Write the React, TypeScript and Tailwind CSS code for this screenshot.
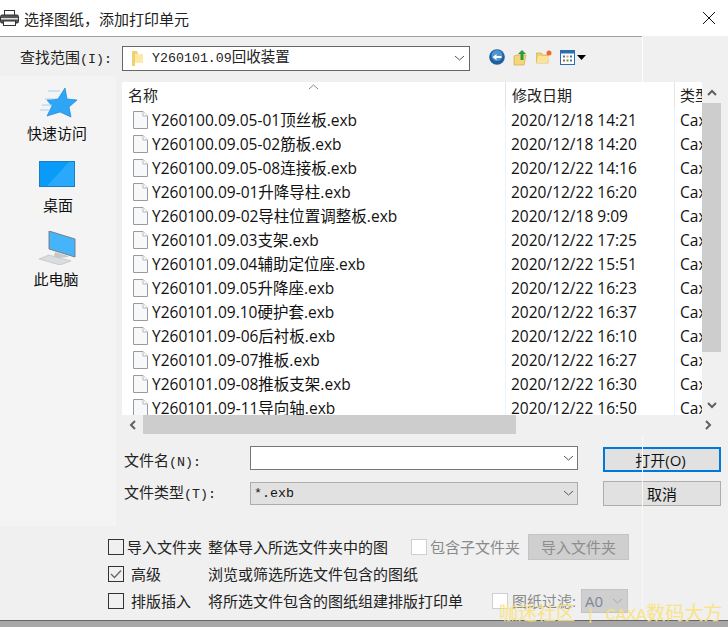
import React from "react";

const sans = "font-['Open_Sans','Noto_Sans_CJK_SC',sans-serif]";
const mono = "font-['Liberation_Mono','Noto_Sans_CJK_SC',monospace]";

const files: [string, string][] = [
  ["Y260100.09.05-01顶丝板.exb", "2020/12/18 14:21"],
  ["Y260100.09.05-02筋板.exb", "2020/12/18 14:20"],
  ["Y260100.09.05-08连接板.exb", "2020/12/22 14:16"],
  ["Y260100.09-01升降导柱.exb", "2020/12/22 16:20"],
  ["Y260100.09-02导柱位置调整板.exb", "2020/12/18 9:09"],
  ["Y260101.09.03支架.exb", "2020/12/22 17:25"],
  ["Y260101.09.04辅助定位座.exb", "2020/12/22 15:51"],
  ["Y260101.09.05升降座.exb", "2020/12/22 16:23"],
  ["Y260101.09.10硬护套.exb", "2020/12/22 16:37"],
  ["Y260101.09-06后衬板.exb", "2020/12/22 16:10"],
  ["Y260101.09-07推板.exb", "2020/12/22 16:27"],
  ["Y260101.09-08推板支架.exb", "2020/12/22 16:30"],
  ["Y260101.09-11导向轴.exb", "2020/12/22 16:50"],
];

const Doc = () => (
  <svg width="15" height="18" viewBox="0 0 15 18" className="shrink-0">
    <path d="M.5.5h9.500l4.500 4.500v12.500h-14z" fill="#f7f8fa" stroke="#9a9a9a" />
    <path d="M10 .5v4.500h4.500" fill="#fff" stroke="#b5b5b5" />
  </svg>
);

const Chevron = ({ d = "M1 1l4.500 4 4.500-4", c = "#555" }: { d?: string; c?: string }) => (
  <svg width="11" height="7" viewBox="0 0 11 7" className="shrink-0">
    <path d={d} fill="none" stroke={c} strokeWidth="1" />
  </svg>
);

const Check = ({ on, dim }: { on?: boolean; dim?: boolean }) => (
  <span className={`w-4 h-4 border flex items-center justify-center shrink-0 ${dim ? "border-[#cfcfcf] bg-white" : "border-[#333] bg-[#f0f0f0]"}`}>
    {on && (
      <svg width="12" height="10" viewBox="0 0 12 10">
        <path d="M1 5l3.500 3.500L11 1.500" fill="none" stroke="#666" strokeWidth="1.300" />
      </svg>
    )}
  </span>
);

const Thick = ({ d }: { d: string }) => (
  <svg width="10" height="10" viewBox="0 0 10 10" className="shrink-0">
    <path d={d} fill="none" stroke="#606060" strokeWidth="2" />
  </svg>
);

const L = ({ children }: { children: React.ReactNode }) => (
  <span className={`${mono} text-[13.300px]`}>{children}</span>
);

export default function App() {
  return (
    <div className={`relative w-[728px] h-[627px] overflow-hidden bg-[#f0f0f0] text-[15px] leading-[18px] text-black ${sans}`}>
      {/* title bar */}
      <div className="h-[37px] bg-white flex items-center border-b border-[#a0a0a0]">
        <svg width="19" height="16" viewBox="0 0 19 16" className="shrink-0 mr-[5px]">
          <rect x="4.500" y=".5" width="10" height="5" fill="#fff" stroke="#333" />
          <rect x="0.500" y="5" width="18" height="8" rx="1.500" fill="#555" stroke="#333" />
          <rect x="1" y="8" width="17" height="1.500" fill="#ddd" />
          <rect x="3.500" y="11" width="12" height="4.500" fill="#fff" stroke="#333" />
        </svg>
        <span className="text-[#222] mt-px">选择图纸，添加打印单元</span>
        <svg width="12" height="12" viewBox="0 0 12 12" className="ml-auto mr-[13px] shrink-0">
          <path d="M0 0l12 12M12 0L0 12" stroke="#111" strokeWidth="1" />
        </svg>
      </div>

      {/* look-in row */}
      <div className="h-[39px] flex items-center">
        <span className="w-[122px] pl-[20px] text-[#222] mt-[3px]">查找范围<L>(I):</L></span>
        <div className="w-[348px] h-[25px] bg-white border border-[#666] flex items-center pl-[8px] pr-[4px] mt-[3px]">
          <svg width="13" height="17" viewBox="0 0 13 17" className="shrink-0 mr-[8px]">
            <path d="M1 1h5l1 3h5v9H4v3H1z" fill="#f5cf6b" />
            <path d="M4 4h8v9H4z" fill="#fde9a8" />
          </svg>
          <span className="text-[14.500px] text-[#222]"><L>Y260101.09</L>回收装置</span>
          <span className="ml-auto"><Chevron /></span>
        </div>
        <svg width="16" height="16" viewBox="0 0 16 16" className="ml-[19px] shrink-0 mt-[1px]">
          <circle cx="8" cy="8" r="7.800" fill="#1f5f9c" />
          <circle cx="8" cy="6.500" r="5.500" fill="#4d94d2" />
          <path d="M3.500 8l4-3v2h5v2h-5v2z" fill="#fff" />
        </svg>
        <svg width="15" height="17" viewBox="0 0 15 17" className="ml-[8px] shrink-0 mt-[1px]">
          <path d="M1 7l3-1h9l-2 10H1z" fill="#f5d67a" stroke="#c9a53f" strokeWidth=".6" />
          <path d="M9 1l4 4h-2.500v6h-3V5H5z" fill="#2f9a38" />
        </svg>
        <svg width="16" height="14" viewBox="0 0 16 14" className="ml-[8px] shrink-0 mt-[1px]">
          <path d="M.5 3h5l1 2H12v8H.5z" fill="#f3cf6e" stroke="#c9a53f" strokeWidth=".6" />
          <path d="M2 6h11l-1.500 7H.5z" fill="#fbe39a" />
          <circle cx="13" cy="3" r="2.500" fill="#f06a2a" />
        </svg>
        <svg width="15" height="15" viewBox="0 0 15 15" className="ml-[8px] shrink-0 mt-[1px]">
          <rect x=".5" y=".5" width="14" height="14" fill="#fff" stroke="#2a6fb0" />
          <rect x=".5" y=".5" width="14" height="3" fill="#2a6fb0" />
          <rect x="3" y="5.500" width="2" height="2" fill="#3a78c0" />
          <rect x="6.500" y="5.500" width="2" height="2" fill="#e0a030" />
          <rect x="10" y="5.500" width="2" height="2" fill="#3a78c0" />
          <rect x="3" y="9.500" width="2" height="2" fill="#d05040" />
          <rect x="6.500" y="9.500" width="2" height="2" fill="#40a050" />
          <rect x="10" y="9.500" width="2" height="2" fill="#3a78c0" />
        </svg>
        <svg width="9" height="5" viewBox="0 0 9 5" className="ml-[2px] shrink-0 mt-[1px]">
          <path d="M0 0h9L4.500 5z" fill="#000" />
        </svg>
      </div>

      {/* body */}
      <div className="flex h-[450px]">
        {/* places bar */}
        <div className="w-[116px] h-full bg-[#f4f4f4] flex flex-col items-center text-[#111]">
          <svg width="38" height="32" viewBox="0 0 38 32" className="mt-[11px] shrink-0">
            <path d="M26 1l2 11 10 1-8 7 2 10-11-5-13 4 5-10-5-6 11-1z" fill="#2ea5f5" stroke="#1a85d8" strokeWidth=".7" />
            <path d="M9 4h12M6 12h9M3 18h10M1 23h10" stroke="#9ed2f5" strokeWidth="1" />
          </svg>
          <span className="mt-[5px] -ml-[2px]">快速访问</span>
          <svg width="36" height="26" viewBox="0 0 36 26" className="mt-[19px] -ml-[2px] shrink-0">
            <rect x=".5" y=".5" width="35" height="25" fill="#0a9bf8" stroke="#1a7dc8" />
            <path d="M8 25L30 1h5v24z" fill="#2aa9fa" />
          </svg>
          <span className="mt-[9px]">桌面</span>
          <svg width="38" height="34" viewBox="0 0 38 34" className="mt-[17px] shrink-0">
            <path d="M10 0l26 8v18L10 18z" fill="#45b4fb" stroke="#777" strokeWidth=".9" />
            <path d="M16 21l13 4v1l-10 1-4-2z" fill="#c8c8c8" />
            <path d="M0 28l10-4 22 6-11 4z" fill="#d8dde2" stroke="#b0b0b0" strokeWidth=".5" />
          </svg>
          <span className="mt-[5px] -ml-[4px]">此电脑</span>
        </div>

        {/* file area */}
        <div className="ml-[6px] w-[599px] flex flex-col">
          <div className="h-[6px]" />
          <div className="flex h-[333px] bg-white">
            <div className="w-[580px] h-full flex flex-col overflow-hidden">
              <div className="relative h-[26px] shrink-0 flex items-end text-[#222]">
                <span className="absolute left-[186px] top-[2px]">
                  <Chevron d="M1 5l4.500-4 4.500 4" c="#888" />
                </span>
                <span className="w-[383px] pl-[6px] pb-[4px]">名称</span>
                <span className="w-[169px] pl-[6px] pb-[4px] border-l border-[#e5e5e5] h-full flex items-end">修改日期</span>
                <span className="w-[28px] pl-[5px] pb-[4px] border-l border-[#e5e5e5] h-full flex items-end overflow-hidden whitespace-nowrap">类型</span>
              </div>
              {files.map(([n, d]) => (
                <div key={n} className="flex h-[24px] shrink-0 text-[15.500px] text-[#111]">
                  <div className="w-[383px] pl-[11px] flex items-center gap-[4px] whitespace-nowrap">
                    <Doc />
                    <span>{n}</span>
                  </div>
                  <div className="w-[169px] pl-[5px] border-l border-[#eaf2fb] flex items-center whitespace-nowrap">{d}</div>
                  <div className="w-[28px] pl-[5px] border-l border-[#eaf2fb] flex items-center overflow-hidden">Cax</div>
                </div>
              ))}
            </div>
            <div className="w-[19px] h-full bg-[#f0f0f0] flex flex-col items-center">
              <div className="h-[21px] shrink-0 flex items-center justify-center"><Thick d="M1 7l4-4 4 4" /></div>
              <div className="w-full h-[249px] shrink-0 bg-[#cdcdcd]" />
              <div className="mt-auto h-[21px] shrink-0 flex items-center justify-center"><Thick d="M1 3l4 4 4-4" /></div>
            </div>
          </div>

          {/* horizontal scroll */}
          <div className="h-[19px] flex items-center">
            <div className="w-[21px] flex justify-center"><Thick d="M7 1L3 5l4 4" /></div>
            <div className="w-[373px] h-full bg-[#cdcdcd]" />
            <div className="ml-auto mr-[3px] w-[20px] flex justify-center"><Thick d="M3 1l4 4-4 4" /></div>
          </div>

          {/* filename rows */}
          <div className="mt-[12px] flex">
            <div className="flex flex-col gap-[12px]">
              <div className="flex items-center h-[24px]">
                <span className="w-[128px] pl-[2px] text-[#222] mt-[6px]">文件名<L>(N):</L></span>
                <div className="w-[328px] h-[24px] bg-white border border-[#777] flex items-center justify-end pr-[3px]"><Chevron /></div>
              </div>
              <div className="flex items-center h-[23px]">
                <span className="w-[128px] pl-[2px] text-[#222]">文件类型<L>(T):</L></span>
                <div className="w-[328px] h-[23px] bg-[#e1e1e1] border border-[#adadad] flex items-center pl-[3px] pr-[3px] text-[#111]">
                  <L>*.exb</L>
                  <span className="ml-auto"><Chevron /></span>
                </div>
              </div>
            </div>
            <div className="ml-[25px] flex flex-col gap-[9px] mt-[1px]">
              <div className="w-[118px] h-[25px] bg-[#e1e1e1] border-2 border-[#0078d7] flex items-center justify-center pr-[3px] text-[#111]">打开(O)</div>
              <div className="w-[118px] h-[25px] bg-[#e1e1e1] border border-[#adadad] flex items-center justify-center text-[#111]">取消</div>
            </div>
          </div>
        </div>
      </div>

      {/* option rows */}
      <div className="pl-[108px] pt-[13px] flex flex-col gap-[11px] text-[#222]">
        <div className="flex items-center h-[16px]">
          <Check />
          <span className="w-[81px] ml-[3px] whitespace-nowrap">导入文件夹</span>
          <span className="w-[203px]">整体导入所选文件夹中的图</span>
          <Check dim />
          <span className="ml-[3px] text-[#8a8a8a] w-[95px]">包含子文件夹</span>
          <span className="ml-[3px] w-[101px] h-[26px] bg-[#cfcfcf] border border-[#c4c4c4] text-[#8d8d8d] flex items-center justify-center">导入文件夹</span>
        </div>
        <div className="flex items-center h-[16px]">
          <Check on />
          <span className="w-[81px] ml-[3px] pl-[4px]">高级</span>
          <span>浏览或筛选所选文件包含的图纸</span>
        </div>
        <div className="flex items-center h-[16px]">
          <Check />
          <span className="w-[81px] ml-[3px] pl-[4px]">排版插入</span>
          <span className="w-[284px] whitespace-nowrap">将所选文件包含的图纸组建排版打印单</span>
          <Check dim />
          <span className="ml-[4px] text-[#8a8a8a] w-[69px] whitespace-nowrap">图纸过滤:</span>
          <span className="w-[47px] h-[24px] bg-[#cfcfcf] border border-[#c4c4c4] text-[#7d8796] flex items-center pl-[3px] pr-[4px]">
            A0<span className="ml-auto"><Chevron c="#aaa" /></span>
          </span>
        </div>
      </div>

      {/* bottom edge of the window */}
      <div className="absolute left-0 right-0 top-[620px] h-[7px] border-t border-[#666] bg-[#a8a8a8]" />
      {/* pale vertical line */}
      <div className="absolute left-[642px] top-[37px] w-px h-[45px] bg-white" />
      <div className="absolute left-[642px] top-[435px] w-px h-[185px] bg-[#f8f8f8]" />
      <div className="absolute left-[642px] right-0 top-[36px] h-px bg-[#f0f0f0]" />
      {/* watermark */}
      <div className="absolute left-[499px] top-[603px] whitespace-nowrap text-[#fbe27a] text-[19px] leading-[20px] opacity-90">
        咖迷社区<span className={`${mono} text-[17px]`}> | CAXA</span>数码大方
      </div>
    </div>
  );
}
